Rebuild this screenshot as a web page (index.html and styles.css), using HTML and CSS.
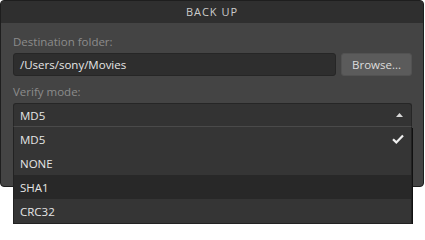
FILE: index.html
```html
<!DOCTYPE html>
<html>
<head>
<meta charset="utf-8">
<link rel="stylesheet" href="styles.css">
</head>
<body>
<div class="dialog">
  <div class="titlebar">BACK UP</div>
  <div class="content">
    <div class="label">Destination folder:</div>
    <div class="row">
      <div class="input">/Users/sony/Movies</div>
      <div class="button">Browse...</div>
    </div>
    <div class="label">Verify mode:</div>
    <div class="select">
      <div class="select-head">
        <span>MD5</span>
        <svg class="caret" width="7" height="4" viewBox="0 0 7 4"><path d="M0 4 L3.5 0 L7 4 Z" fill="#d8d8d8"/></svg>
      </div>
      <div class="list">
        <div class="item">MD5
          <svg class="check" width="12" height="10" viewBox="0 0 12 10"><path d="M1 5.2 L4.3 8.4 L11 1.4" fill="none" stroke="#f0f0f0" stroke-width="2.2"/></svg>
        </div>
        <div class="item">NONE</div>
        <div class="item hover">SHA1</div>
        <div class="item">CRC32</div>
      </div>
    </div>
  </div>
</div>
</body>
</html>
```

FILE: styles.css
```css
html, body {
  margin: 0;
  background: #ffffff;
}
body {
  font-family: "Open Sans", "Noto Sans", sans-serif;
  font-size: 11px;
  min-height: 224px;
}
.dialog {
  width: 424px;
  height: 187px;
  background: #444444;
  border: 1px solid #1e1e1e;
  border-radius: 4px;
  box-sizing: border-box;
  position: relative;
}
.titlebar {
  height: 22px;
  line-height: 22px;
  background: #2f2f2f;
  border-radius: 3px 3px 0 0;
  text-align: center;
  color: #cccccc;
  letter-spacing: 1px;
  font-size: 11px;
}
.content {
  padding: 9px 11px 0 12px;
}
.label {
  color: #8c8c8c;
  height: 21px;
  line-height: 20px;
  font-size: 11.5px;
}
.row {
  display: flex;
  gap: 5px;
  margin-bottom: 6px;
}
.input {
  flex: 1;
  height: 23px;
  line-height: 21px;
  box-sizing: border-box;
  background: #2e2e2e;
  border: 1px solid #262626;
  border-radius: 3px;
  color: #e6e6e6;
  padding: 0 6px;
  font-size: 11.5px;
}
.button {
  width: 71px;
  height: 23px;
  line-height: 22px;
  box-sizing: border-box;
  background: #5b5b5b;
  border: 1px solid #525252;
  border-radius: 3px;
  color: #dddddd;
  text-align: center;
  font-size: 11.5px;
}
.select {
  position: relative;
}
.select-head {
  height: 24px;
  box-sizing: border-box;
  background: #333333;
  border: 1px solid #262626;
  border-bottom: 1px solid #4a4a4a;
  border-radius: 3px 3px 0 0;
  display: flex;
  align-items: center;
  justify-content: space-between;
  padding: 0 8px 0 6px;
  color: #e6e6e6;
  font-size: 11.5px;
}
.list {
  position: absolute;
  top: 24px;
  left: 0;
  right: 0;
  background: #353535;
  border: 1px solid #222222;
  border-top: none;
  box-shadow: 1px 1px 0 #111;
  z-index: 2;
}
.item {
  height: 24px;
  display: flex;
  align-items: center;
  justify-content: space-between;
  padding: 0 7px 0 6px;
  color: #e6e6e6;
  font-size: 11.5px;
}
.item.hover {
  background: #282828;
}
```
